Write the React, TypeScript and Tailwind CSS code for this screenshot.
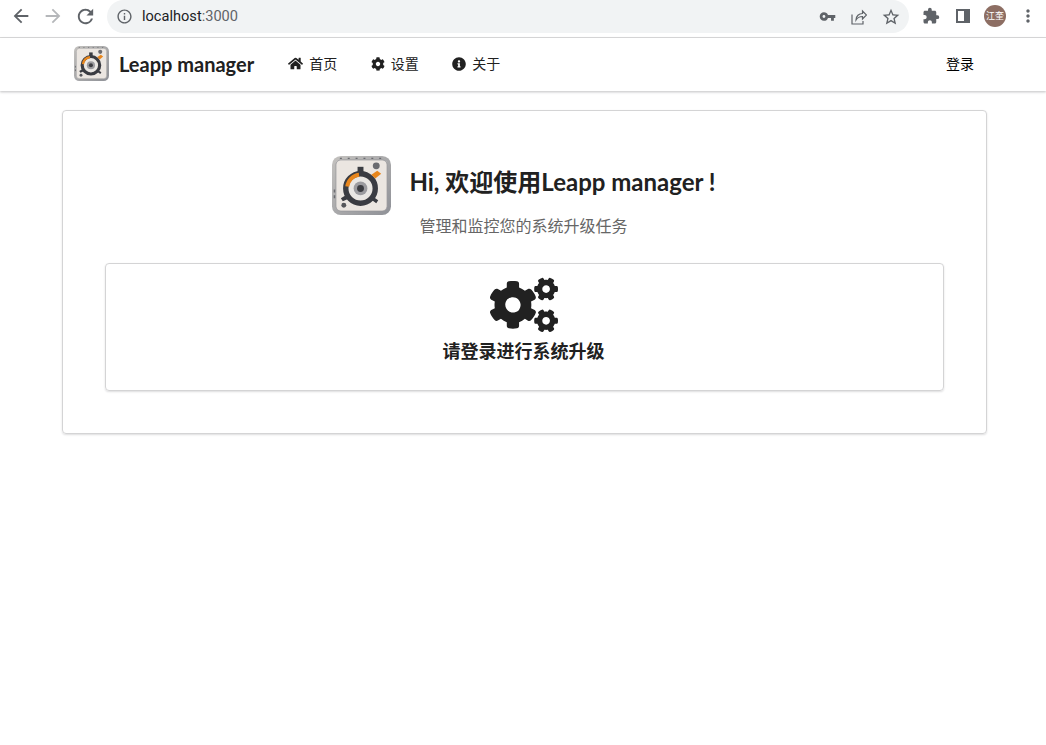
import React from 'react';
import { FaHome, FaCog, FaInfoCircle, FaCogs } from 'react-icons/fa';
import { MdArrowBack, MdArrowForward, MdRefresh, MdInfoOutline, MdStarBorder, MdMoreVert, MdVpnKey, MdExtension } from 'react-icons/md';

const cjk = "font-['Lato','Noto_Sans_CJK_SC',sans-serif]";

// metal plate logo, ring with orange arc
const Logo = ({ size, id }: { size: number; id: string }) => (
    <svg width={size} height={size} viewBox="0 0 60 60">
        <defs>
            <linearGradient id={id} x1="0" y1="0" x2="1" y2="1">
                <stop offset="0" stopColor="#c4c2bf" />
                <stop offset="1" stopColor="#8f9197" />
            </linearGradient>
        </defs>
        <rect width="60" height="60" rx="9" fill={`url(#${id})`} />
        <rect x="4" y="4" width="52" height="52" rx="5" fill="#ebe6e1" stroke="#97979a" strokeWidth="0.8" />
        <path d="M8 2.500h44" stroke="#6a6b70" strokeWidth="1.200" strokeDasharray="2 6" />
        <path d="M2.500 34v12" stroke="#6a6b70" strokeWidth="1.500" strokeDasharray="3 3" />
        <circle cx="29" cy="33" r="15" fill="none" stroke="#3a3c42" strokeWidth="5.500" />
        <rect x="26" y="11" width="6" height="9" fill="#3a3c42" />
        <path d="M14 40l-5 3 2 3 7-3zM41 41l6 4-2 3-7-5z" fill="#3a3c42" />
        <path d="M15.500 31a14 14 0 0 1 12-12" fill="none" stroke="#e8861c" strokeWidth="4" />
        <path d="M40 19l6-4 4 3-6 5z" fill="#e8861c" />
        <circle cx="29" cy="33" r="11" fill="#e9e7e4" />
        <circle cx="29" cy="33" r="7" fill="#9c9ca0" />
        <circle cx="29" cy="33" r="3.500" fill="#3c3d42" />
        <circle cx="45" cy="10" r="3.500" fill="#6a6b70" />
        <circle cx="12" cy="50" r="2.500" fill="#55565a" />
    </svg>
);

const ShareIcon = () => (
    <svg width="16" height="16" viewBox="0 0 16 16" fill="none" stroke="#5f6368" strokeWidth="1.2">
        <path d="M1 5.500V15h11v-3" />
        <path d="M5 11c0-4 3-6.500 6.500-6.500V2L15.500 6l-4 4V7.500C8.500 7.500 6.500 8.500 5 11z" />
    </svg>
);

const NavItem = ({ icon, label }: { icon: React.ReactNode; label: string }) => (
    <div className="flex items-center gap-[6px] text-[14px] text-[#212121]">
        {icon}
        <span>{label}</span>
    </div>
);

const App: React.FC = () => {
    return (
        <div className={`min-h-[745px] bg-white ${cjk}`}>
            {/* browser toolbar */}
            <div className="flex h-[38px] items-start border-b border-[#dcdcdc] bg-white pl-[10px]">
                <div className="flex h-[32px] items-center gap-[10px] text-[#5f6368]">
                    <MdArrowBack size={22} />
                    <MdArrowForward size={22} className="text-[#b5b7ba]" />
                    <MdRefresh size={23} />
                </div>
                <div className="ml-[10px] flex h-[33px] w-[802px] items-center rounded-full bg-[#f1f3f4] pl-[9px] pr-[8px]">
                    <MdInfoOutline size={17} className="text-[#5f6368]" />
                    <span className="ml-[9px] font-['Roboto',sans-serif] text-[14.6px] text-[#202124]">
                        localhost<span className="text-[#5f6368]">:3000</span>
                    </span>
                    <div className="ml-auto flex items-center gap-[14px] text-[#5f6368]">
                        <MdVpnKey size={17} className="mr-[1px]" />
                        <ShareIcon />
                        <MdStarBorder size={20} />
                    </div>
                </div>
                <div className="ml-[13px] flex h-[32px] items-center text-[#5f6368]">
                    <MdExtension size={18} />
                    <div className="ml-[16px] h-[14px] w-[14px] border-2 border-r-[6px] border-[#5f6368]" />
                    <div className="ml-[14px] flex h-[22px] w-[22px] items-center justify-center rounded-full bg-[#8d6e63] text-[9px] text-white">
                        江奎
                    </div>
                    <MdMoreVert size={20} className="ml-[12px]" />
                </div>
            </div>

            {/* app nav */}
            <div className="flex h-[53px] items-center bg-white pb-[2px] pl-[74px] pr-[71px] shadow-[0_1px_2px_0_rgba(34,36,38,0.15),0_1px_3px_0_rgba(34,36,38,0.15)]">
                <Logo size={35} id="nav-logo" />
                <span className="ml-[10px] text-[20px] font-bold text-[#212121]">Leapp manager</span>
                <div className="ml-[34px] flex items-center gap-[33.5px]">
                    <NavItem icon={<FaHome size={15} />} label="首页" />
                    <NavItem icon={<FaCog size={14} />} label="设置" />
                    <NavItem icon={<FaInfoCircle size={14} />} label="关于" />
                </div>
                <span className="ml-auto pr-[1px] text-[14px] text-black">登录</span>
            </div>

            {/* main card */}
            <div className="ml-[62px] mt-[19px] h-[324px] w-[925px] rounded-[4px] border border-[#d4d4d5] px-[42px] shadow-[0_1px_2px_0_rgba(34,36,38,0.15)]">
                <div className="flex flex-col items-center pt-[45px]">
                    <div className="flex items-center gap-[18px] pr-[1px]">
                        <Logo size={59} id="hero-logo" />
                        <h1 className="pb-[8px] text-[24px] font-bold text-[#212121]">Hi, 欢迎使用Leapp manager !</h1>
                    </div>
                    <p className="pr-[2px] text-[16px] leading-[22px] text-[#666666]">管理和监控您的系统升级任务</p>
                </div>
                <div className="mt-[26px] flex h-[128px] w-[839px] flex-col items-center rounded-[4px] border border-[#d4d4d5] pr-[2px] pt-[7px] shadow-[0_1px_2px_0_rgba(34,36,38,0.15)]">
                    <FaCogs size={68} className="text-[#212121]" />
                    <div className="mt-[-1px] text-[18px] font-bold text-[#212121]">请登录进行系统升级</div>
                </div>
            </div>
        </div>
    );
};

export default App;
